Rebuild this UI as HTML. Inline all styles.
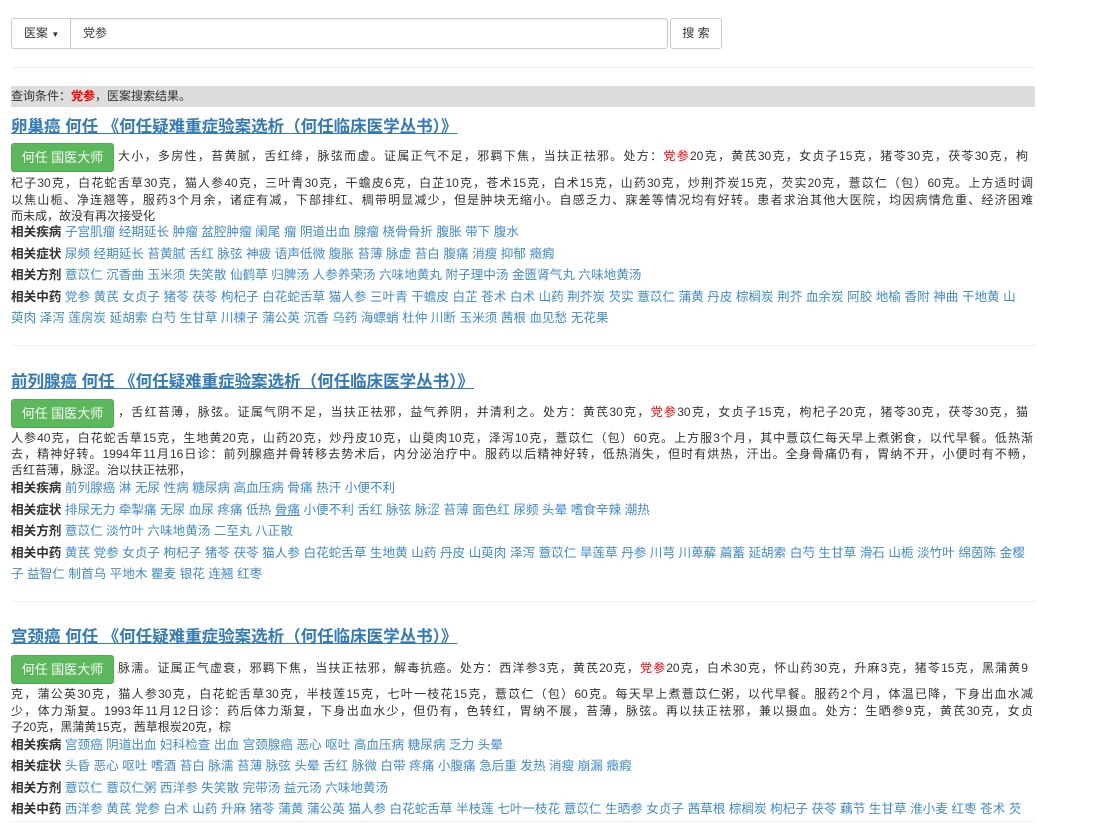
<!DOCTYPE html>
<html><head><meta charset="utf-8">
<style>
*{margin:0;padding:0;box-sizing:border-box}
body{width:1094px;height:824px;overflow:hidden;background:#fff;position:relative;font-family:"Liberation Sans","Noto Sans CJK SC",sans-serif;color:#333;font-size:12px}
.a{position:absolute}
a{color:#337ab7;text-decoration:none}
.hr{position:absolute;left:11px;width:1024px;height:1px;background:#eee}
.title{position:absolute;left:11px;font-size:16.5px;font-weight:bold;color:#337ab7;text-decoration:underline;line-height:20px;white-space:nowrap}
.btn{position:absolute;left:11px;width:103px;height:29px;background:#5cb85c;border:1px solid #4cae4c;border-radius:3px;color:#fff;font-size:13px;line-height:27px;text-align:center}
.ln{position:absolute;left:11px;width:1022px;line-height:17px;height:17px;white-space:nowrap;text-align:justify;text-align-last:justify;font-size:12px;overflow:hidden}
.ln.first{left:118px;width:910px}
.ln.last{text-align-last:left}
.r{position:absolute;left:11px;width:1026px;line-height:17px;white-space:nowrap;font-size:12.6px;overflow:hidden}
.r b{color:#333}
.r a{color:#428bca}
.red{color:#f00}
</style></head><body>

<div class="a" style="left:11px;top:18px;width:60px;height:31px;border:1px solid #ccc;border-radius:3px 0 0 3px;font-size:12px;line-height:29px;padding-left:12px">医案 <span style="font-size:8px">▼</span></div>
<div class="a" style="left:70px;top:18px;width:598px;height:31px;border:1px solid #ccc;border-radius:0 3px 3px 0;font-size:12px;line-height:29px;padding-left:12px;box-shadow:inset 0 1px 1px rgba(0,0,0,.075)">党参</div>
<div class="a" style="left:670px;top:18px;width:52px;height:31px;border:1px solid #ccc;border-radius:3px;font-size:12px;line-height:29px;text-align:center">搜 索</div>

<div class="hr" style="top:67px"></div>
<div class="a" style="left:11px;top:86px;width:1024px;height:21px;background:#ddd;line-height:21px;font-size:12px">查询条件：<span class="red" style="font-weight:bold">党参</span>，医案搜索结果。</div>

<!-- section 1 -->
<div class="title" style="top:117px">卵巢癌 何任 《何任疑难重症验案选析（何任临床医学丛书）》</div>
<div class="btn" style="top:143px">何任 国医大师</div>
<div class="ln first" style="top:148px">大小，多房性，苔黄腻，舌红绛，脉弦而虚。证属正气不足，邪羁下焦，当扶正祛邪。处方：<span class="red">党参</span>20克，黄芪30克，女贞子15克，猪苓30克，茯苓30克，枸</div>
<div class="ln" style="top:175px">杞子30克，白花蛇舌草30克，猫人参40克，三叶青30克，干蟾皮6克，白芷10克，苍术15克，白术15克，山药30克，炒荆芥炭15克，芡实20克，薏苡仁（包）60克。上方适时调</div>
<div class="ln" style="top:192px">以焦山栀、净连翘等，服药3个月余，诸症有减，下部排红、稠带明显减少，但是肿块无缩小。自感乏力、寐差等情况均有好转。患者求治其他大医院，均因病情危重、经济困难</div>
<div class="ln last" style="top:208px">而未成，故没有再次接受化</div>
<div class="r" style="top:224px"><b>相关疾病</b> <a>子宫肌瘤 经期延长 肿瘤 盆腔肿瘤 阑尾 瘤 阴道出血 腺瘤 桡骨骨折 腹胀 带下 腹水</a></div>
<div class="r" style="top:246px"><b>相关症状</b> <a>尿频 经期延长 苔黄腻 舌红 脉弦 神疲 语声低微 腹胀 苔薄 脉虚 苔白 腹痛 消瘦 抑郁 癥瘕</a></div>
<div class="r" style="top:267px"><b>相关方剂</b> <a>薏苡仁 沉香曲 玉米须 失笑散 仙鹤草 归脾汤 人参养荣汤 六味地黄丸 附子理中汤 金匮肾气丸 六味地黄汤</a></div>
<div class="r" style="top:289px"><b>相关中药</b> <a>党参 黄芪 女贞子 猪苓 茯苓 枸杞子 白花蛇舌草 猫人参 三叶青 干蟾皮 白芷 苍术 白术 山药 荆芥炭 芡实 薏苡仁 蒲黄 丹皮 棕榈炭 荆芥 血余炭 阿胶 地榆 香附 神曲 干地黄 山</a></div>
<div class="r" style="top:310px"><a>萸肉 泽泻 莲房炭 延胡索 白芍 生甘草 川楝子 蒲公英 沉香 乌药 海螵蛸 杜仲 川断 玉米须 茜根 血见愁 无花果</a></div>

<div class="hr" style="top:345px"></div>

<!-- section 2 -->
<div class="title" style="top:372px">前列腺癌 何任 《何任疑难重症验案选析（何任临床医学丛书）》</div>
<div class="btn" style="top:399px">何任 国医大师</div>
<div class="ln first" style="top:404px">，舌红苔薄，脉弦。证属气阴不足，当扶正祛邪，益气养阴，并清利之。处方：黄芪30克，<span class="red">党参</span>30克，女贞子15克，枸杞子20克，猪苓30克，茯苓30克，猫</div>
<div class="ln" style="top:430px">人参40克，白花蛇舌草15克，生地黄20克，山药20克，炒丹皮10克，山萸肉10克，泽泻10克，薏苡仁（包）60克。上方服3个月，其中薏苡仁每天早上煮粥食，以代早餐。低热渐</div>
<div class="ln" style="top:446px">去，精神好转。1994年11月16日诊：前列腺癌并骨转移去势术后，内分泌治疗中。服药以后精神好转，低热消失，但时有烘热，汗出。全身骨痛仍有，胃纳不开，小便时有不畅，</div>
<div class="ln last" style="top:462px">舌红苔薄，脉涩。治以扶正祛邪，</div>
<div class="r" style="top:480px"><b>相关疾病</b> <a>前列腺癌 淋 无尿 性病 糖尿病 高血压病 骨痛 热汗 小便不利</a></div>
<div class="r" style="top:502px"><b>相关症状</b> <a>排尿无力 牵掣痛 无尿 血尿 疼痛 低热 <u>骨痛</u> 小便不利 舌红 脉弦 脉涩 苔薄 面色红 尿频 头晕 嗜食辛辣 潮热</a></div>
<div class="r" style="top:523px"><b>相关方剂</b> <a>薏苡仁 淡竹叶 六味地黄汤 二至丸 八正散</a></div>
<div class="r" style="top:545px"><b>相关中药</b> <a>黄芪 党参 女贞子 枸杞子 猪苓 茯苓 猫人参 白花蛇舌草 生地黄 山药 丹皮 山萸肉 泽泻 薏苡仁 旱莲草 丹参 川芎 川萆薢 萹蓄 延胡索 白芍 生甘草 滑石 山栀 淡竹叶 绵茵陈 金樱</a></div>
<div class="r" style="top:566px"><a>子 益智仁 制首乌 平地木 瞿麦 银花 连翘 红枣</a></div>

<div class="hr" style="top:601px"></div>

<!-- section 3 -->
<div class="title" style="top:627px">宫颈癌 何任 《何任疑难重症验案选析（何任临床医学丛书）》</div>
<div class="btn" style="top:655px">何任 国医大师</div>
<div class="ln first" style="top:660px">脉濡。证属正气虚衰，邪羁下焦，当扶正祛邪，解毒抗癌。处方：西洋参3克，黄芪20克，<span class="red">党参</span>20克，白术30克，怀山药30克，升麻3克，猪苓15克，黑蒲黄9</div>
<div class="ln" style="top:686px">克，蒲公英30克，猫人参30克，白花蛇舌草30克，半枝莲15克，七叶一枝花15克，薏苡仁（包）60克。每天早上煮薏苡仁粥，以代早餐。服药2个月，体温已降，下身出血水减</div>
<div class="ln" style="top:703px">少，体力渐复。1993年11月12日诊：药后体力渐复，下身出血水少，但仍有，色转红，胃纳不展，苔薄，脉弦。再以扶正祛邪，兼以摄血。处方：生晒参9克，黄芪30克，女贞</div>
<div class="ln last" style="top:719px">子20克，黑蒲黄15克，茜草根炭20克，棕</div>
<div class="r" style="top:737px"><b>相关疾病</b> <a>宫颈癌 阴道出血 妇科检查 出血 宫颈腺癌 恶心 呕吐 高血压病 糖尿病 乏力 头晕</a></div>
<div class="r" style="top:758px"><b>相关症状</b> <a>头昏 恶心 呕吐 嗜酒 苔白 脉濡 苔薄 脉弦 头晕 舌红 脉微 白带 疼痛 小腹痛 急后重 发热 消瘦 崩漏 癥瘕</a></div>
<div class="r" style="top:780px"><b>相关方剂</b> <a>薏苡仁 薏苡仁粥 西洋参 失笑散 完带汤 益元汤 六味地黄汤</a></div>
<div class="r" style="top:801px"><b>相关中药</b> <a>西洋参 黄芪 党参 白术 山药 升麻 猪苓 蒲黄 蒲公英 猫人参 白花蛇舌草 半枝莲 七叶一枝花 薏苡仁 生晒参 女贞子 茜草根 棕榈炭 枸杞子 茯苓 藕节 生甘草 淮小麦 红枣 苍术 芡</a></div>
<div class="hr" style="top:821px"></div>
</body></html>
